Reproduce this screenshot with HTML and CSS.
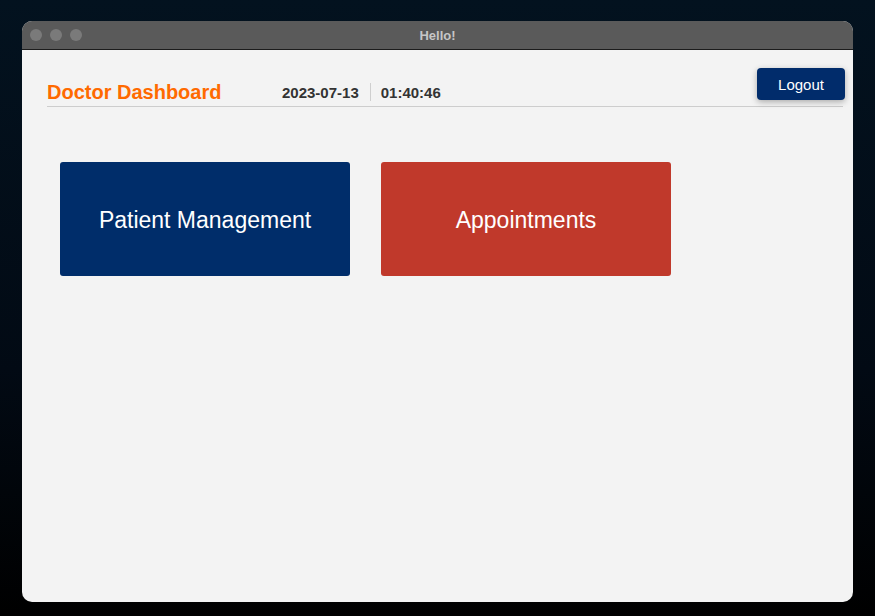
FILE: index.html
```html
<!DOCTYPE html>
<html lang="en">
<head>
<meta charset="utf-8">
<title>Hello!</title>
<link rel="stylesheet" href="styles.css">
</head>
<body>
<div class="window">
  <div class="titlebar">
    <div class="lights">
      <span class="light"></span>
      <span class="light"></span>
      <span class="light"></span>
    </div>
    <div class="title">Hello!</div>
  </div>
  <div class="content">
    <header class="header">
      <h1 class="brand">Doctor Dashboard</h1>
      <div class="datetime">
        <span class="date">2023-07-13</span>
        <span class="sep"></span>
        <span class="time">01:40:46</span>
      </div>
    </header>
    <button class="logout">Logout</button>
    <div class="cards">
      <div class="card card-blue">Patient Management</div>
      <div class="card card-red">Appointments</div>
    </div>
  </div>
</div>
</body>
</html>
```

FILE: styles.css
```css
html, body {
  margin: 0;
  padding: 0;
  height: 100%;
}
body {
  background: linear-gradient(to bottom, #03121f 0%, #020a14 60%, #000000 100%);
  font-family: "Liberation Sans", Arial, sans-serif;
  overflow: hidden;
}
.window {
  position: relative;
  margin: 21px 0 0 22px;
  width: 831px;
  height: 581px;
  border-radius: 10px;
  overflow: hidden;
  background: #f3f3f3;
  display: flex;
  flex-direction: column;
}
.titlebar {
  position: relative;
  height: 28px;
  background: #5a5a5a;
  border-bottom: 1px solid #1c1c1c;
  display: flex;
  align-items: center;
  justify-content: center;
  flex-shrink: 0;
}
.lights {
  position: absolute;
  left: 8px;
  top: 8px;
  display: flex;
  gap: 8px;
}
.light {
  width: 12px;
  height: 12px;
  border-radius: 50%;
  background: #7a7a7a;
}
.title {
  color: #c6c6c6;
  font-weight: bold;
  font-size: 13px;
  margin-top: 0;
}
.content {
  position: relative;
  flex: 1;
  padding: 0 10px 0 25px;
}
.header {
  display: flex;
  align-items: flex-end;
  height: 57px;
  border-bottom: 1px solid #cdcdcd;
  box-sizing: border-box;
}
.brand {
  margin: 0 0 2px 0;
  font-size: 20px;
  font-weight: bold;
  color: #ff6a00;
  width: 235px;
  line-height: 23px;
}
.datetime {
  display: flex;
  align-items: center;
  gap: 11px;
  margin-bottom: 5px;
  font-size: 15px;
  font-weight: bold;
  color: #333333;
}
.sep {
  width: 1px;
  height: 18px;
  background: #cfcfcf;
  margin-right: -1px;
}
.logout {
  position: absolute;
  top: 18px;
  right: 8px;
  width: 88px;
  height: 32px;
  border: none;
  border-radius: 4px;
  background: #012c6b;
  color: #ffffff;
  font-family: "Liberation Sans", Arial, sans-serif;
  font-size: 15px;
  box-shadow: 0 2px 6px rgba(0, 0, 0, 0.3);
  cursor: pointer;
}
.cards {
  display: flex;
  gap: 31px;
  margin: 55px 0 0 13px;
}
.card {
  width: 290px;
  height: 114px;
  box-sizing: border-box;
  padding-top: 2px;
  border-radius: 3px;
  color: #ffffff;
  font-size: 23px;
  display: flex;
  align-items: center;
  justify-content: center;
}
.card-blue {
  background: #002d6a;
}
.card-red {
  background: #c0392b;
}
```
